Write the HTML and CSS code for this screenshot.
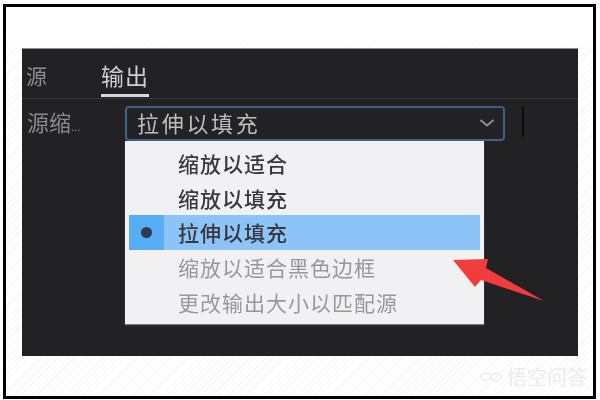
FILE: index.html
```html
<!DOCTYPE html>
<html lang="zh">
<head>
<meta charset="utf-8">
<title>输出</title>
<link rel="stylesheet" href="styles.css">
</head>
<body>
<div class="frame">
  <div class="panel">
    <div class="tabs">
      <span class="tab">源</span>
      <span class="tab tab-active">输出</span>
    </div>
    <div class="row">
      <span class="label">源缩<small>...</small></span>
      <div class="field">
        <div class="select">
          <span class="select-text">拉伸以填充</span>
          <svg class="chevron" width="16" height="10" viewBox="0 0 16 10"><path d="M1.5 2 L8 7.5 L14.5 2" fill="none" stroke="#8f8f92" stroke-width="2"/></svg>
        </div>
        <div class="menu">
          <div class="item"><span class="item-label">缩放以适合</span></div>
          <div class="item"><span class="item-label">缩放以填充</span></div>
          <div class="item item-selected"><span class="check"><span class="dot"></span></span><span class="item-label">拉伸以填充</span></div>
          <div class="item item-disabled"><span class="item-label">缩放以适合黑色边框</span></div>
          <div class="item item-disabled"><span class="item-label">更改输出大小以匹配源</span></div>
        </div>
      </div>
      <span class="divider"></span>
    </div>
  </div>
  <svg class="arrow" width="100" height="50" viewBox="445 255 100 50"><polygon points="450,260 485,259 483,268 541,301 478,280 472,287" fill="#f23b3b"/></svg>
  <div class="watermark">
    <svg width="22" height="14" viewBox="0 0 22 14"><ellipse cx="6" cy="7" rx="5" ry="3.5" fill="none" stroke="#ececec" stroke-width="1.5"/><ellipse cx="16" cy="7" rx="5" ry="3.5" fill="none" stroke="#ececec" stroke-width="1.5"/></svg>
    <span>悟空问答</span>
  </div>
</div>
</body>
</html>
```
FILE: styles.css
```css
* { box-sizing: border-box; }
html, body { margin: 0; padding: 0; background: #fff; }
body { width: 600px; height: 400px; overflow: hidden; font-family: "Noto Sans CJK SC", "Noto Sans", sans-serif; }
.frame {
  position: relative;
  width: 593px;
  height: 395px;
  margin: 4px 0 0 3px;
  border: 3px solid #000;
  padding: 41px 15px 40px 16px;
  background:
    linear-gradient(#fff 0 30px, rgba(255,255,255,0) 45px),
    repeating-linear-gradient(135deg, #f6f6f6 0 1px, #fff 1px 4px);
}
.panel { height: 308px; background: #222124; border-top: 1px solid #8c8c8c; display: flex; flex-direction: column; }
.tabs { height: 50px; padding-left: 4px; display: flex; border-bottom: 1px solid #363537; }
.tab { font-size: 21px; line-height: 28px; padding-top: 12px; color: #8e8e8e; filter: blur(.6px); }
.tab-active { margin-left: 54px; width: 48px; height: 48px; font-size: 23px; letter-spacing: 1px; color: #cfcfcf; border-bottom: 3px solid #d8d8d8; }
.row { display: flex; align-items: flex-start; padding: 7px 0 0 5px; }
.label { width: 98px; font-size: 22px; line-height: 30px; color: #8b8b8b; filter: blur(.6px); }
.label small { font-size: 11px; }
.field { position: relative; width: 380px; }
.select { height: 35px; display: flex; align-items: center; justify-content: space-between; padding: 0 8px 3px 10px; border: 2px solid #3b6288; border-radius: 4px; background: #232226; }
.select-text { font-size: 22px; letter-spacing: 2.7px; color: #bdbdbd; filter: blur(.6px); }
.menu { position: absolute; left: 0; top: 35px; width: 359px; height: 183px; padding: 5px 4px 0; background: #f1f0f3; box-shadow: 0 1px 1px #777; }
.item { height: 34.5px; padding-left: 49px; font-size: 21px; line-height: 34px; letter-spacing: 1px; font-weight: 500; color: #38383c; display: flex; }
.item-disabled { color: #98989b; font-weight: 400; }
.item-selected { height: 35px; padding-left: 0; background: #8cc4f7; }
.item-label { filter: blur(.4px); }
.check { width: 35px; background: #58aef5; display: flex; align-items: center; justify-content: center; margin-right: 14px; }
.dot { width: 11px; height: 11px; border-radius: 50%; background: #2e3b4a; }
.chevron { margin-top: 2px; }
.divider { width: 2px; height: 31px; margin-left: 17px; background: #0b0b0c; }
.arrow { position: absolute; left: 442px; top: 248px; }
.watermark { position: absolute; left: 474px; top: 356px; display: flex; align-items: center; gap: 5px; font-size: 20px; line-height: 28px; color: #ececec; }
```
